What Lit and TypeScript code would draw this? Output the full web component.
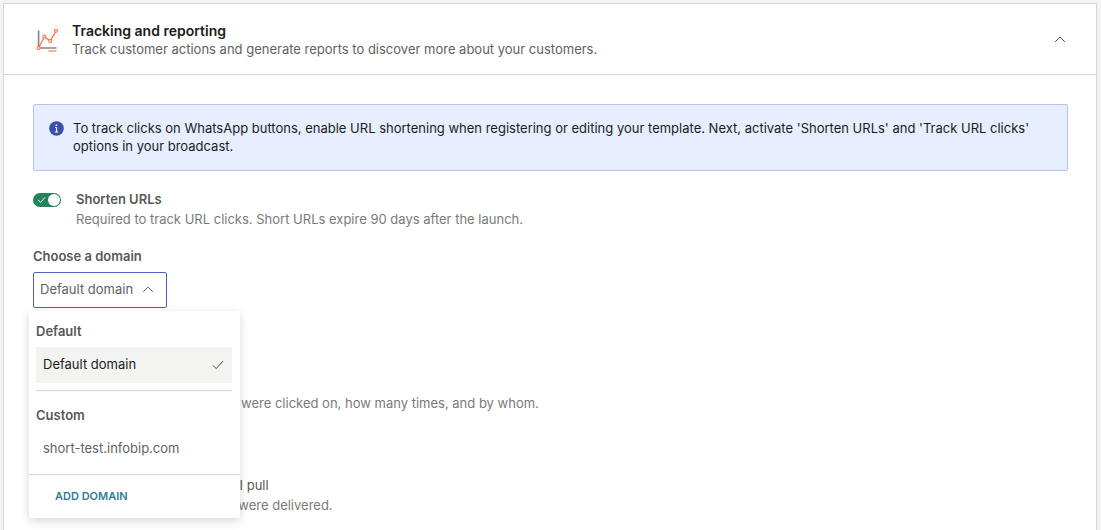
import { LitElement, html, css, svg } from "lit";
import { customElement, property, state } from "lit/decorators.js";

const chevronUp = html`<svg class="chevron" viewBox="0 0 12 12" width="12" height="12" aria-hidden="true">
  <path d="M1.2 7.9 L6 3.1 L10.8 7.9" fill="none" stroke="currentColor" stroke-width="1" />
</svg>`;

const chartPoints = [
  [2.6, 20],
  [8.4, 8.8],
  [14.3, 13],
  [20, 2.8],
];

@customElement("toggle-row")
export class ToggleRow extends LitElement {
  @property() heading = "";
  @property() hint = "";
  @property({ type: Boolean }) light = false;
  @property({ type: Boolean }) checked = false;

  static styles = css`
    :host {
      display: grid;
      grid-template-columns: 28px 1fr;
      column-gap: 15px;
      font-size: 13px;
      line-height: 18px;
    }
    .switch {
      display: grid;
      align-self: start;
      margin-top: 3px;
    }
    .switch > * {
      grid-area: 1 / 1;
    }
    .box {
      appearance: none;
      display: flex;
      width: 28px;
      height: 14px;
      margin: 0;
      padding: 1px;
      box-sizing: border-box;
      border-radius: 7px;
      background: #8f8f8d;
    }
    .box::before {
      content: "";
      width: 12px;
      height: 12px;
      border-radius: 50%;
      background: #fff;
    }
    .box:checked {
      justify-content: flex-end;
      background: #22845c;
    }
    .tick {
      pointer-events: none;
    }
    .text {
      display: grid;
      row-gap: 2px;
    }
    .heading {
      font-weight: 600;
      color: #585857;
    }
    .light {
      font-weight: 400;
    }
    .hint {
      color: #7a7a78;
    }
  `;

  render() {
    return html`
      <div class="switch">
        <input class="box" id="box" type="checkbox" role="switch" aria-describedby="hint" .checked=${this.checked} />
        <svg class="tick" viewBox="0 0 28 14" width="28" height="14" aria-hidden="true">
          <path d="M5 6.8 L7.6 9.4 L12 4.4" fill="none" stroke="#fff" stroke-width="1" />
        </svg>
      </div>
      <div class="text">
        <label class="heading ${this.light ? "light" : ""}" for="box">${this.heading}</label>
        <span class="hint" id="hint">${this.hint}</span>
      </div>
    `;
  }
}

@customElement("domain-menu")
export class DomainMenu extends LitElement {
  @property() selected = "";

  static styles = css`
    :host {
      display: block;
      box-sizing: border-box;
      background: #fff;
      border-radius: 2px;
      box-shadow: 0 3px 10px rgba(0, 0, 0, 0.16);
      font-size: 13px;
      line-height: 18px;
      color: #626261;
    }
    .groups {
      padding: 11px 8px 7px 7px;
    }
    .group + .group {
      margin-top: 7px;
      padding-top: 15px;
      border-top: 1px solid #d5d5d3;
    }
    .name {
      margin: 0 0 7px;
      font-size: 13px;
      font-weight: 600;
      color: #585857;
    }
    .option {
      display: flex;
      align-items: center;
      justify-content: space-between;
      box-sizing: border-box;
      width: 100%;
      height: 36px;
      padding: 0 8px 2px 7px;
      border: 0;
      border-radius: 1px;
      background: none;
      font: inherit;
      color: inherit;
      text-align: left;
    }
    .option.current {
      background: #f3f3f2;
      color: #1c1c1b;
    }
    .footer {
      border-top: 1px solid #d5d5d3;
      padding: 12px 26px 13px;
    }
    .add {
      display: block;
      padding: 0;
      border: 0;
      background: none;
      font: inherit;
      font-size: 11px;
      font-weight: 600;
      color: #337b98;
    }
  `;

  private option(name: string) {
    const current = name === this.selected;
    return html`<button class="option ${current ? "current" : ""}" role="option" aria-selected=${current}
      @click=${() => this.dispatchEvent(new CustomEvent("pick", { detail: name }))}>
      ${name}
      ${current
        ? html`<svg viewBox="0 0 12 12" width="12" height="12" aria-hidden="true">
            <path d="M1 7.4 L4.2 10.6 L11 3.2" fill="none" stroke="#444443" stroke-width="1" />
          </svg>`
        : ""}
    </button>`;
  }

  render() {
    return html`
      <div class="groups" role="listbox" aria-label="Choose a domain">
        <div class="group" role="group" aria-labelledby="default">
          <h4 class="name" id="default">Default</h4>
          ${this.option("Default domain")}
        </div>
        <div class="group" role="group" aria-labelledby="custom">
          <h4 class="name" id="custom">Custom</h4>
          ${this.option("short-test.infobip.com")}
        </div>
      </div>
      <div class="footer"><button class="add">ADD DOMAIN</button></div>
    `;
  }
}

@customElement("app-root")
export class AppRoot extends LitElement {
  @state() private domain = "Default domain";

  static styles = css`
    :host {
      display: block;
      box-sizing: border-box;
      height: 100vh;
      overflow: hidden;
      padding: 3px 4px 0 3px;
      background: #f3f3f2;
      font-family: Inter, "Liberation Sans", sans-serif;
      font-size: 13px;
      line-height: 18px;
      color: #626261;
    }
    .card {
      min-height: 100vh;
      border: 1px solid #d5d5d3;
      background: #fff;
    }
    .header {
      display: flex;
      align-items: center;
      padding: 18px 30px 16px;
      border-bottom: 1px solid #d5d5d3;
    }
    .chart {
      margin: 0 12px 0 2px;
    }
    .titles {
      flex: 1;
    }
    .title {
      margin: 0;
      font-size: 14px;
      line-height: 18px;
      font-weight: 600;
      color: #1c1c1b;
    }
    .subtitle {
      margin: 0;
    }
    .collapse {
      display: flex;
      padding: 0;
      border: 0;
      background: none;
      color: #3c3c3b;
    }
    .body {
      padding: 29px 28px 0 29px;
    }
    .notice {
      display: flex;
      gap: 9px;
      margin-bottom: 19px;
      padding: 14px 15px 15px;
      border: 1px solid #b6c4ea;
      border-radius: 2px;
      background: #e6eeff;
      color: #1c1c1b;
    }
    .notice p {
      margin: 0;
    }
    .info {
      flex: none;
      margin-top: 2px;
    }
    .field {
      position: relative;
      margin: 19px 0 66px;
    }
    .label {
      display: block;
      margin-bottom: 7px;
      font-weight: 600;
      color: #585857;
    }
    .picker {
      display: inline-grid;
      align-items: center;
      vertical-align: top;
    }
    .picker > * {
      grid-area: 1 / 1;
    }
    .picker .chevron {
      justify-self: end;
      margin-right: 13px;
      pointer-events: none;
    }
    .select {
      appearance: none;
      height: 36px;
      padding: 0 32px 2px 6px;
      border: 1px solid #4a63bd;
      border-radius: 2px;
      background: #fff;
      font: inherit;
      color: #626261;
    }
    .menu {
      position: absolute;
      z-index: 1;
      top: 64px;
      left: -4px;
      width: 211px;
    }
    .reports {
      margin-top: 64px;
    }
  `;

  render() {
    return html`
      <section class="card">
        <header class="header">
          <svg class="chart" viewBox="0 0 24 24" width="24" height="24" aria-hidden="true">
            <path d="M2.6 2.5 V20 H20.5" fill="none" stroke="#848483" stroke-width="1.6" />
            <path d="M12.5 23 H20.5" stroke="#ffae90" stroke-width="2" />
            <polyline points=${chartPoints.map((p) => p.join(",")).join(" ")} fill="none" stroke="#fc6b38" stroke-width="1.2" />
            ${chartPoints.map(([x, y]) => svg`<circle cx=${x} cy=${y} r="1.5" fill="#fff" stroke="#fc6b38" stroke-width="1.1" />`)}
          </svg>
          <div class="titles">
            <h2 class="title">Tracking and reporting</h2>
            <p class="subtitle">Track customer actions and generate reports to discover more about your customers.</p>
          </div>
          <button class="collapse" aria-label="Collapse" aria-expanded="true">${chevronUp}</button>
        </header>
        <div class="body">
          <div class="notice" role="note">
            <svg class="info" viewBox="0 0 15 15" width="15" height="15" aria-hidden="true">
              <circle cx="7.5" cy="7.5" r="7.3" fill="#3a50b0" />
              <rect x="6.6" y="3.4" width="1.5" height="1.5" fill="#fff" />
              <path d="M6 6.5 H7.6 V11 M5.9 11 H9.2" fill="none" stroke="#fff" stroke-width="1" />
            </svg>
            <p>To track clicks on WhatsApp buttons, enable URL shortening when registering or editing your template. Next, activate 'Shorten URLs' and 'Track URL clicks' options in your broadcast.</p>
          </div>
          <toggle-row checked heading="Shorten URLs"
            hint="Required to track URL clicks. Short URLs expire 90 days after the launch."></toggle-row>
          <div class="field">
            <label class="label" for="domain">Choose a domain</label>
            <div class="picker">
              <select class="select" id="domain">
                <option>${this.domain}</option>
              </select>
              ${chevronUp}
            </div>
            <domain-menu class="menu" .selected=${this.domain}
              @pick=${(e: CustomEvent) => (this.domain = e.detail)}></domain-menu>
          </div>
          <toggle-row checked heading="Track URL clicks"
            hint="Find out which short URLs were clicked on, how many times, and by whom."></toggle-row>
          <toggle-row class="reports" light heading="Delivery reports via the API pull"
            hint="Find out if your messages were delivered."></toggle-row>
        </div>
      </section>
    `;
  }
}
